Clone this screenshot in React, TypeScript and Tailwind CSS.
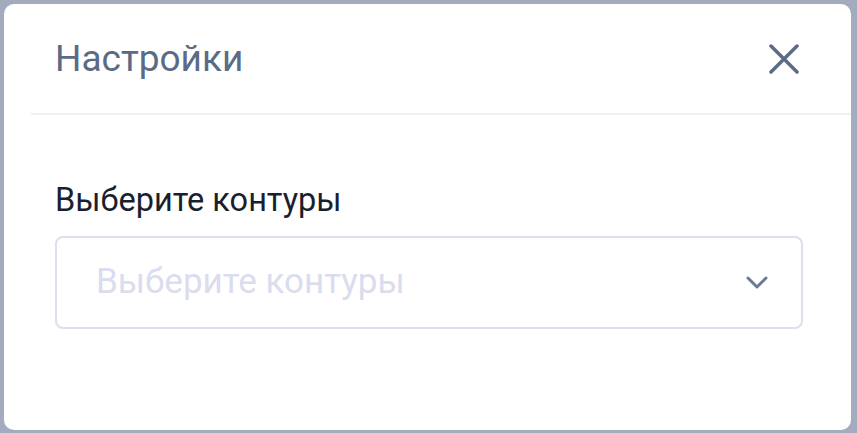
export default function App() {
  return (
    <div className="w-[857px] h-[433px] bg-[#a3abbe] pt-[4px] pl-[4px]" style={{ fontFamily: "Roboto, 'Noto Sans', sans-serif" }}>
      <div className="w-[847px] h-[426px] bg-white rounded-[10px] flex flex-col">
        <div className="ml-[27px] h-[111px] flex items-center justify-between border-b-2 border-[#eef0f4] pl-[24px] pr-[52px]">
          <h2 className="text-[37px] leading-[44px] font-normal text-[#5b6b85]">Настройки</h2>
          <button className="text-[#5b6b85]">
            <svg width="30" height="30" viewBox="0 0 30 30" fill="none" stroke="currentColor" strokeWidth="3.5" strokeLinecap="round">
              <path d="M2 2L28 28M28 2L2 28" />
            </svg>
          </button>
        </div>
        <div className="pl-[51px] pr-[48px] pt-[66px]">
          <label className="block text-[32.5px] leading-[38px] text-[#1a1f2e] mb-[17px]">Выберите контуры</label>
          <div className="h-[93px] border-2 border-[#dcdfee] rounded-[8px] flex items-center justify-between pl-[39px] pr-[33px]">
            <span className="text-[35px] text-[#dadcef]">Выберите контуры</span>
            <svg width="22" height="13" viewBox="0 0 22 13" fill="none" stroke="#6b7a90" strokeWidth="3" strokeLinecap="round" strokeLinejoin="round">
              <path d="M2 2L11 11L20 2" />
            </svg>
          </div>
        </div>
      </div>
    </div>
  );
}
